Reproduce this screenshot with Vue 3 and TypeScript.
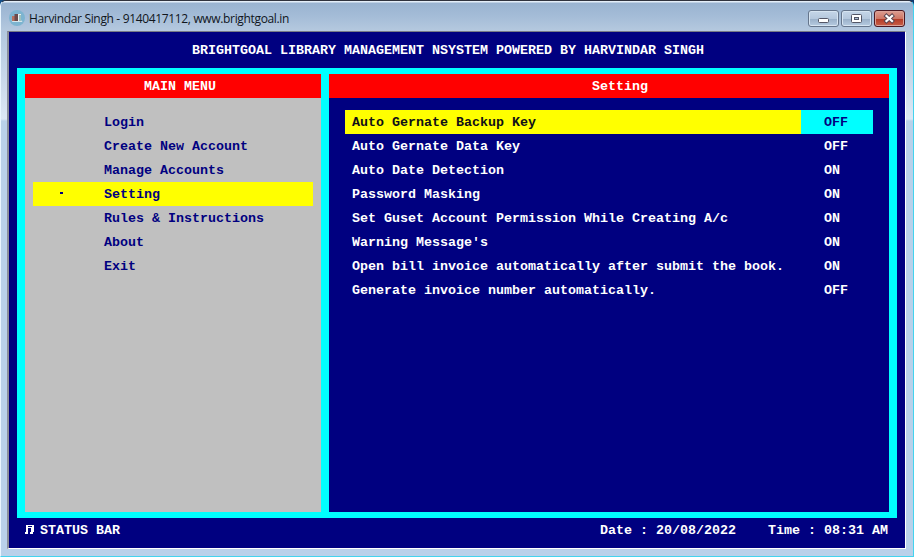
<script setup lang="ts">
interface Option { label: string; value: 'ON' | 'OFF' }

const menu: string[] = ['Login', 'Create New Account', 'Manage Accounts', 'Setting', 'Rules & Instructions', 'About', 'Exit']
const activeMenu = 3
const activeOption = 0
const options: Option[] = [
  { label: 'Auto Gernate Backup Key', value: 'OFF' },
  { label: 'Auto Gernate Data Key', value: 'OFF' },
  { label: 'Auto Date Detection', value: 'ON' },
  { label: 'Password Masking', value: 'ON' },
  { label: 'Set Guset Account Permission While Creating A/c', value: 'ON' },
  { label: "Warning Message's", value: 'ON' },
  { label: 'Open bill invoice automatically after submit the book.', value: 'ON' },
  { label: 'Generate invoice number automatically.', value: 'OFF' },
]
</script>

<template>
  <div class="desktop">
    <div class="window">
      <header class="titlebar">
        <svg class="app-icon" width="16" height="16" viewBox="0 0 16 16">
          <circle cx="8" cy="8" r="8" fill="#7db4d0" />
          <path d="M2.500 10.500h10l1 1.500H3.500z" fill="#d5e6ec" />
          <path d="M3 6h3v5H3z" fill="#b5705f" />
          <path d="M5.500 4h3.500v7H5.500z" fill="#6b4a4c" />
          <path d="M9 4h3v7H9z" fill="#e9f0ee" />
          <path d="M10.500 5h1v6h-1z" fill="#55918e" />
        </svg>
        <span class="caption">Harvindar Singh - 9140417112, www.brightgoal.in</span>
        <div class="controls">
          <button class="control" aria-label="Minimize">
            <svg width="29" height="15" viewBox="0 0 29 15"><rect x="9.500" y="7.500" width="10" height="4" rx="1" fill="#fff" stroke="#535666" /></svg>
          </button>
          <button class="control" aria-label="Maximize">
            <svg width="29" height="15" viewBox="0 0 29 15">
              <rect x="9.500" y="3.500" width="10" height="8" rx="1" fill="#fff" stroke="#535666" />
              <rect x="12.500" y="6.500" width="4" height="2" fill="#a9bcd2" stroke="#535666" />
            </svg>
          </button>
          <button class="control close" aria-label="Close">
            <svg width="29" height="15" viewBox="0 0 29 15">
              <path d="M11.500 5l5.500 5M17 5l-5.500 5" stroke="#5a4550" stroke-width="4.200" stroke-linecap="square" />
              <path d="M11.500 5l5.500 5M17 5l-5.500 5" stroke="#fff" stroke-width="2.300" stroke-linecap="square" />
            </svg>
          </button>
        </div>
      </header>
      <main class="console">
        <h1 class="banner">BRIGHTGOAL LIBRARY MANAGEMENT NSYSTEM POWERED BY HARVINDAR SINGH</h1>
        <div class="panels">
          <nav class="menu">
            <h2 class="heading">MAIN MENU</h2>
            <div class="menu-list">
              <div v-for="(item, i) in menu" :key="item" class="menu-item" :class="{ active: i === activeMenu }">
                <i class="marker"></i><span>{{ item }}</span>
              </div>
            </div>
          </nav>
          <section class="settings">
            <h2 class="heading">Setting</h2>
            <div class="option-list">
              <div v-for="(option, i) in options" :key="option.label" class="option" :class="{ active: i === activeOption }">
                <span class="label">{{ option.label }}</span>
                <span class="value">{{ option.value }}</span>
              </div>
            </div>
          </section>
        </div>
        <footer class="status">
          <svg class="note" width="9" height="10" viewBox="0 0 9 10" shape-rendering="crispEdges">
            <path d="M1 0h8v3H1zM1 2h2v5H1zM6 2h2v5H6zM7 2h2v5H7zM0 7h3v2H0zM5 7h3v2H5z" fill="#fff" />
            <path d="M3 1h4v1H3z" fill="#000080" />
          </svg>
          <span>STATUS BAR</span>
          <span class="date">Date : 20/08/2022</span>
          <span class="time">Time : 08:31 AM</span>
        </footer>
      </main>
    </div>
  </div>
</template>

<style>
body { margin: 0; overflow: hidden; }
</style>

<style scoped>
* { box-sizing: border-box; }
.desktop { width: 914px; height: 557px; background: linear-gradient(90deg, #14508b, #252a38 3%, #252a38 97%, #0d3973); }
.window {
  height: 557px; border: 1px solid #43d3ee; border-top-color: #30333d; border-left-color: #eaf6ff;
  border-radius: 6px 6px 0 0; padding: 0 7px 7px 6px;
  background: linear-gradient(#9cb6d3 0, #b2c8df 30px, #dce8f5 118px, #b9d1ea 120px, #b9d1ea 100%);
}
.titlebar {
  height: 30px; margin: 0 -7px 0 -6px; padding: 9px 8px 0; display: flex; align-items: flex-start;
  background: linear-gradient(#e4eef8 0, #e4eef8 1px, #9ab4d1 2px, #a4bcd7 15px, #b5c9df 30px);
  border-radius: 5px 5px 0 0;
}
.app-icon { display: block; }
.caption { margin-left: 4px; font: 12px/17px "Open Sans", "Noto Sans", sans-serif; letter-spacing: -0.34px; color: #10151c; white-space: nowrap; }
.controls { margin-left: auto; display: flex; gap: 2px; }
.control {
  width: 31px; height: 17px; padding: 0; border: 1px solid #65758b; border-radius: 3px; display: flex;
  background: linear-gradient(#c5d6e8 0, #b5c8dd 50%, #99afc8 52%, #b6cbe0 100%); box-shadow: inset 0 0 0 1px #d6e4f1;
}
.close { border-color: #4b1721; background: linear-gradient(#dc9d91 0, #cf7766 50%, #b33a26 52%, #c95f48 100%); box-shadow: inset 0 0 0 1px #dba298; }
.control svg { display: block; flex: none; }
.console {
  height: 518px; border: solid #fff; border-width: 1px; border-left: 2px solid #8b909b; border-top-color: #777b86;
  background: #000080; color: #fff; padding: 6px 8px;
  font: bold 13.333px/26px "Liberation Mono", monospace; white-space: pre;
}
.banner, .heading { margin: 0; font: inherit; }
.banner { height: 30px; padding-left: 175px; }
.panels { height: 450px; padding: 6px 8px; display: flex; gap: 8px; background: #0ff; }
.menu { width: 296px; background: #c0c0c0; color: #000080; }
.settings { width: 560px; background: #000080; }
.heading { height: 24px; background: #f00; color: #fff; }
.menu .heading { padding-left: 119px; }
.settings .heading { padding-left: 263px; }
.menu-list { padding: 12px 8px; }
.menu-item { height: 24px; display: flex; }
.marker { width: 3px; height: 2px; margin: 10px 41px 0 27px; }
.active { background: #ff0; color: #000080; }
.active .marker { background: #000080; }
.option-list { padding: 12px 16px; }
.option { height: 24px; display: flex; }
.label { width: 456px; padding-left: 7px; }
.value { width: 72px; padding-left: 23px; }
.option.active .label { color: #101018; }
.option.active .value { background: #0ff; }
.status { height: 24px; padding: 0 9px 0 8px; display: flex; }
.note { margin: 7px 6px 0 0; }
.date { margin-left: auto; margin-right: 32px; }
</style>
